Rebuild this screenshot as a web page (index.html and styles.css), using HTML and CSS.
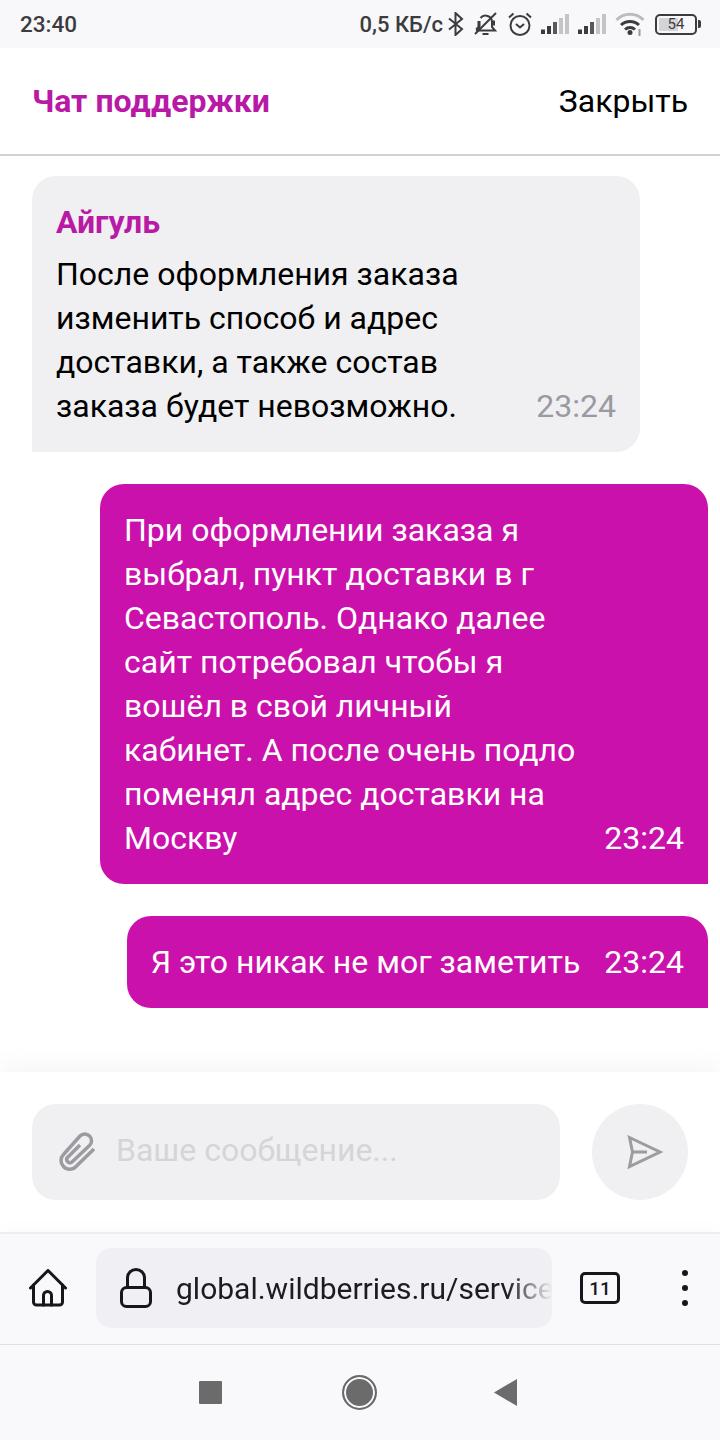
FILE: index.html
```html
<!DOCTYPE html>
<html lang="ru">
<head>
    <meta charset="UTF-8">
    <meta name="viewport" content="width=device-width, initial-scale=1.0">
    <title>Чат поддержки</title>
    <link rel="stylesheet" href="styles.css">
</head>
<body>
    <div class="status-bar">
        <span class="clock">23:40</span>
        <div class="status-right">
            <span class="speed">0,5 КБ/с</span>
            <svg class="ic-bt" width="16" height="24" viewBox="0 0 16 24" fill="none" stroke="#3c3c3e" stroke-width="2"><path d="M1 6.500 14 17 7.500 23V1L14 7 1 17.500"/></svg>
            <svg class="ic-bell" width="25" height="24" viewBox="0 0 25 24" fill="none" stroke="#3c3c3e"><path stroke-width="2" d="M3 18.500h19l-3-3.500V10a6.500 6.500 0 0 0-11.500-4"/><path stroke-width="3" d="M6 9v6l-2.500 3M20.500 8.500v5"/><path stroke-width="2" d="M9.500 22h6"/><path stroke-width="2" d="M2 22 23 1"/></svg>
            <svg class="ic-alarm" width="24" height="24" viewBox="0 0 24 24" fill="none" stroke="#3c3c3e" stroke-width="2"><circle cx="12" cy="13.500" r="9.500"/><path d="M8 12l4 3.500 4-3.500"/><path d="M1 5.500 5.500 1.500M23 5.500 18.500 1.500"/></svg>
            <svg class="ic-signal" width="29" height="20" viewBox="0 0 29 20"><rect x="0" y="15.500" width="4" height="4.500" fill="#3c3c3e"/><rect x="6" y="12" width="4" height="8" fill="#3c3c3e"/><rect x="12" y="8" width="4" height="12" fill="#58585a"/><rect x="18" y="4" width="4" height="16" fill="#c4c4c6"/><rect x="24" y="0" width="4" height="20" fill="#c4c4c6"/></svg>
            <svg class="ic-signal" width="29" height="20" viewBox="0 0 29 20"><rect x="0" y="15.500" width="4" height="4.500" fill="#3c3c3e"/><rect x="6" y="12" width="4" height="8" fill="#3c3c3e"/><rect x="12" y="8" width="4" height="12" fill="#58585a"/><rect x="18" y="4" width="4" height="16" fill="#c4c4c6"/><rect x="24" y="0" width="4" height="20" fill="#c4c4c6"/></svg>
            <svg class="ic-wifi" width="30" height="24" viewBox="0 0 30 24" fill="none" stroke-width="3"><path d="M1.500 8a19 19 0 0 1 27 0" stroke="#bcbcbe"/><path d="M6 13a13 13 0 0 1 18 0" stroke="#3c3c3e"/><path d="M10 17.500a7.500 7.500 0 0 1 10 0" stroke="#3c3c3e"/><circle cx="15" cy="20.500" r="2.500" fill="#3c3c3e"/><path d="M24.500 17v7" stroke="#9a9a9c" stroke-width="2"/></svg>
            <div class="battery"><span class="battery-fill"></span><span class="battery-num">54</span></div>
            <span class="battery-nub"></span>
        </div>
    </div>

    <div class="chat-header">
        <span class="chat-title">Чат поддержки</span>
        <span class="chat-close">Закрыть</span>
    </div>

    <div class="messages">
        <div class="bubble bubble-in">
            <div class="author">Айгуль</div>
            <div class="bubble-row">
                <div class="bubble-text">После оформления заказа изменить способ и адрес доставки, а также состав заказа будет невозможно.</div>
                <span class="time">23:24</span>
            </div>
        </div>
        <div class="bubble bubble-out">
            <div class="bubble-row">
                <div class="bubble-text">При оформлении заказа я выбрал, пункт доставки в г Севастополь. Однако далее сайт потребовал чтобы я вошёл в свой личный кабинет. А после очень подло поменял адрес доставки на Москву</div>
                <span class="time">23:24</span>
            </div>
        </div>
        <div class="bubble bubble-out">
            <div class="bubble-row">
                <div class="bubble-text">Я это никак не мог заметить</div>
                <span class="time">23:24</span>
            </div>
        </div>
    </div>

    <div class="composer">
        <div class="composer-field">
            <svg width="40" height="40" viewBox="0 0 40 40" fill="none" stroke="#9b9ba1" stroke-width="3.500"><path d="M38 17 20 34.500a8.500 8.500 0 0 1-12.500 0 8.500 8.500 0 0 1 0-12L24 4a6.500 6.500 0 0 1 9.500 0 6.500 6.500 0 0 1 0 9.500L16 30a3 3 0 0 1-4.500-.5 3 3 0 0 1 0-4L24 13"/></svg>
            <span class="placeholder">Ваше сообщение...</span>
        </div>
        <div class="send-btn">
            <svg width="48" height="48" viewBox="0 0 48 48" fill="none" stroke="#9b9ba1" stroke-width="3"><path d="M13.500 9.500 44 24 13.500 38.500 16.500 24Z"/><path d="M16.500 24H31"/></svg>
        </div>
    </div>

    <div class="browser-bar">
        <svg width="38" height="38" viewBox="0 0 38 38" fill="none" stroke="#17171b" stroke-width="3" stroke-linejoin="round" stroke-linecap="round"><path d="M1.500 19 19 1.500 36.500 19"/><path d="M4.500 16v17a3 3 0 0 0 3 3h23a3 3 0 0 0 3-3V16"/><path d="M14.500 36v-9.500a4 4 0 0 1 8 0V36"/></svg>
        <div class="address">
            <svg width="32" height="40" viewBox="0 0 32 40" fill="none" stroke="#17171b" stroke-width="3"><rect x="1.500" y="19.500" width="29" height="19" rx="5"/><path d="M7.500 19.500V9.500a8.500 8 0 0 1 17 0v10"/></svg>
            <span class="url">global.wildberries.ru/service</span>
        </div>
        <div class="tabs-count">11</div>
        <div class="more"><span></span><span></span><span></span></div>
    </div>

    <div class="nav-bar">
        <span class="nav-square"></span>
        <span class="nav-circle"></span>
        <span class="nav-back"></span>
    </div>
</body>
</html>
```

FILE: styles.css
```css
* {
    box-sizing: border-box;
}
body {
    font-family: Roboto, sans-serif;
    margin: 0;
    width: 720px;
    height: 1440px;
    display: flex;
    flex-direction: column;
    overflow: hidden;
    background: #fff;
    color: #000;
}
.status-bar {
    height: 48px;
    flex: none;
    display: flex;
    justify-content: space-between;
    align-items: center;
    padding: 0 19px 0 20px;
    background: #f8f8fa;
    color: #3c3c3e;
    font-size: 22px;
    font-weight: 500;
}
.clock {
    font-size: 22.5px;
}
.status-right {
    display: flex;
    align-items: center;
}
.speed {
    margin-right: 5px;
}
.ic-bt {
    margin-right: 9px;
}
.ic-bell {
    margin-right: 10px;
}
.ic-alarm {
    margin-right: 9px;
}
.ic-signal {
    margin-right: 8px;
}
.ic-wifi {
    margin-right: 10px;
}
.battery {
    position: relative;
    width: 42px;
    height: 21px;
    border: 2px solid #3c3c3e;
    border-radius: 5px;
    display: flex;
    align-items: center;
    justify-content: center;
}
.battery-fill {
    position: absolute;
    left: 2px;
    top: 2px;
    bottom: 2px;
    width: 19px;
    background: #d4d4d6;
}
.battery-num {
    position: relative;
    font-size: 15px;
    font-weight: 400;
    line-height: 1;
}
.battery-nub {
    width: 3px;
    height: 8px;
    margin-left: 1px;
    background: #3c3c3e;
    border-radius: 0 2px 2px 0;
}
.chat-header {
    height: 108px;
    flex: none;
    display: flex;
    justify-content: space-between;
    align-items: center;
    padding: 0 32px;
    border-bottom: 2px solid #d1d1d5;
}
.chat-title {
    font-size: 32px;
    font-weight: 700;
    color: #b81aa6;
}
.chat-close {
    font-size: 32px;
}
.messages {
    flex: 1;
    display: flex;
    flex-direction: column;
    gap: 32px;
    padding: 20px 12px 0 32px;
}
.bubble {
    width: fit-content;
    max-width: 608px;
    padding: 24px;
    border-radius: 24px;
    font-size: 32px;
    line-height: 44px;
}
.bubble-in {
    background: #f0f0f2;
    border-bottom-left-radius: 0;
}
.bubble-out {
    align-self: flex-end;
    background: #cb11ab;
    color: #fff;
    border-bottom-right-radius: 0;
}
.author {
    margin-bottom: 8px;
    font-weight: 700;
    color: #b81aa6;
}
.bubble-row {
    display: flex;
    gap: 24px;
}
.bubble-text {
    flex: 1;
}
.time {
    flex: none;
    align-self: flex-end;
}
.bubble-in .time {
    color: #9a9aa2;
}
.composer {
    position: relative;
    flex: none;
    height: 160px;
    display: flex;
    gap: 32px;
    padding: 32px;
    background: #fff;
    box-shadow: 0 -8px 24px rgba(0, 0, 0, 0.04);
}
.composer-field {
    flex: 1;
    display: flex;
    align-items: center;
    gap: 20px;
    padding: 0 24px;
    background: #f0f0f2;
    border-radius: 24px;
}
.placeholder {
    padding-bottom: 4px;
    font-size: 32px;
    color: #d4d4d9;
}
.send-btn {
    flex: none;
    width: 96px;
    height: 96px;
    display: flex;
    align-items: center;
    justify-content: center;
    background: #f0f0f2;
    border-radius: 50%;
}
.browser-bar {
    position: relative;
    flex: none;
    height: 113px;
    display: flex;
    align-items: center;
    padding: 14px 0 16px 29px;
    background: #f9f9fb;
    border-top: 2px solid #ecedf0;
    border-bottom: 1px solid #dedfe2;
    box-shadow: 0 -6px 14px rgba(0, 0, 0, 0.015);
}
.address {
    width: 456px;
    height: 80px;
    margin-left: 29px;
    display: flex;
    align-items: center;
    gap: 24px;
    padding-left: 24px;
    background: #f0f0f4;
    border-radius: 16px;
    overflow: hidden;
}
.url {
    flex: 1;
    overflow: hidden;
    white-space: nowrap;
    font-size: 30px;
    color: #1c1c20;
    -webkit-mask-image: linear-gradient(90deg, #000 88%, transparent 100%);
    mask-image: linear-gradient(90deg, #000 88%, transparent 100%);
}
.tabs-count {
    width: 40px;
    height: 32px;
    margin-left: 28px;
    display: flex;
    align-items: center;
    justify-content: center;
    border: 3px solid #17171b;
    border-radius: 5px;
    font-size: 19px;
    font-weight: 500;
    color: #17171b;
}
.more {
    margin-left: 62px;
    display: flex;
    flex-direction: column;
    gap: 9px;
}
.more span {
    width: 6px;
    height: 6px;
    border-radius: 50%;
    background: #17171b;
}
.nav-bar {
    flex: none;
    height: 95px;
    display: flex;
    align-items: center;
    background: #f9f9fb;
}
.nav-square {
    width: 23px;
    height: 23px;
    margin-left: 199px;
    background: #6b6b6b;
    border-radius: 1px;
}
.nav-circle {
    width: 35px;
    height: 35px;
    margin-left: 120px;
    border: 2px solid #6b6b6b;
    border-radius: 50%;
    background: #6b6b6b;
    box-shadow: inset 0 0 0 2px #f9f9fb;
}
.nav-back {
    width: 23px;
    height: 27px;
    margin-left: 117px;
    background: #6b6b6b;
    clip-path: polygon(0 50%, 100% 0, 100% 100%);
}
```
